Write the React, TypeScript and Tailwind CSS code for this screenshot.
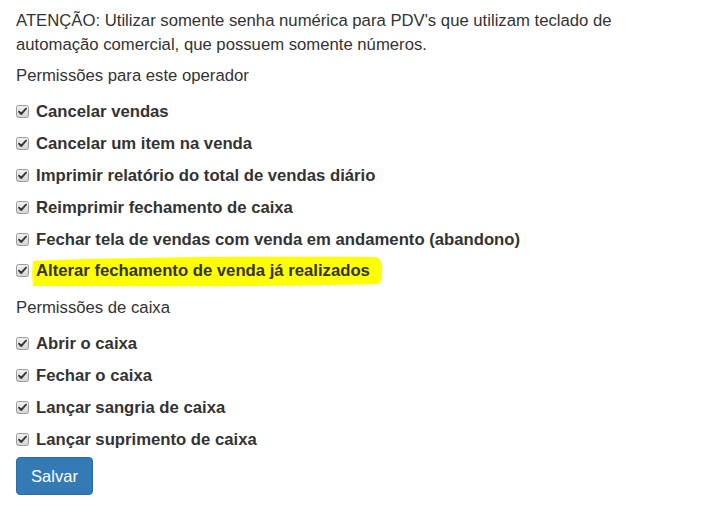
import React from "react";

function Check() {
  return (
    <svg width="13" height="13" viewBox="0 0 13 13" className="shrink-0">
      <defs>
        <linearGradient id="cbg" x1="0" y1="0" x2="0" y2="1">
          <stop offset="0" stopColor="#f2f2f2" />
          <stop offset="1" stopColor="#d4d4d4" />
        </linearGradient>
      </defs>
      <rect x="0.5" y="0.5" width="12" height="12" rx="2" fill="url(#cbg)" stroke="#9a9a9a" />
      <path d="M3 6.6 L5.2 9 L10 3.6" fill="none" stroke="#3a3a3a" strokeWidth="1.9" strokeLinejoin="round" strokeLinecap="round" />
    </svg>
  );
}

function Row({ label, highlight }: { label: string; highlight?: boolean }) {
  return (
    <div className="flex h-[31.8px] items-center">
      <Check />
      {highlight ? (
        <span className="relative ml-[7px] font-bold leading-[19px]">
          <svg className="absolute left-[-4px] top-[-5px]" width="352" height="31" viewBox="0 0 352 31">
            <path
              d="M1 5 C60 2, 200 0, 343 1 C348 2, 350 6, 350 12 C350 20, 349 26, 347 28 C250 31, 120 30, 1 30 C0 20, 0 12, 1 5 Z"
              fill="#ffff00"
            />
          </svg>
          <span className="relative">{label}</span>
        </span>
      ) : (
        <span className="ml-[7px] font-bold leading-[19px]">{label}</span>
      )}
    </div>
  );
}

export default function App() {
  const ops = [
    "Cancelar vendas",
    "Cancelar um item na venda",
    "Imprimir relatório do total de vendas diário",
    "Reimprimir fechamento de caixa",
    "Fechar tela de vendas com venda em andamento (abandono)",
  ];
  const caixa = ["Abrir o caixa", "Fechar o caixa", "Lançar sangria de caixa", "Lançar suprimento de caixa"];
  return (
    <div
      className="w-[711px] h-[524px] bg-white pl-[16px] pt-[9px] text-[16.7px] text-[#333]"
      style={{ fontFamily: '"Liberation Sans", Arial, sans-serif' }}
    >
      <p className="leading-[24px] w-[650px]">
        ATENÇÃO: Utilizar somente senha numérica para PDV's que utilizam teclado de automação comercial, que possuem
        somente números.
      </p>
      <div className="h-[32px] mt-[3px] flex items-center">Permissões para este operador</div>
      <div className="flex flex-col mt-[4px]">
        {ops.map((o) => (
          <Row key={o} label={o} />
        ))}
        <Row label="Alterar fechamento de venda já realizados" highlight />
      </div>
      <div className="h-[32px] mt-[5px] flex items-center">Permissões de caixa</div>
      <div className="flex flex-col mt-[4px]">
        {caixa.map((o) => (
          <Row key={o} label={o} />
        ))}
      </div>
      <button className="mt-[2px] h-[38px] w-[77px] rounded-[4px] border border-[#2e6da4] bg-[#337ab7] text-white text-[16.5px]">
        Salvar
      </button>
    </div>
  );
}
